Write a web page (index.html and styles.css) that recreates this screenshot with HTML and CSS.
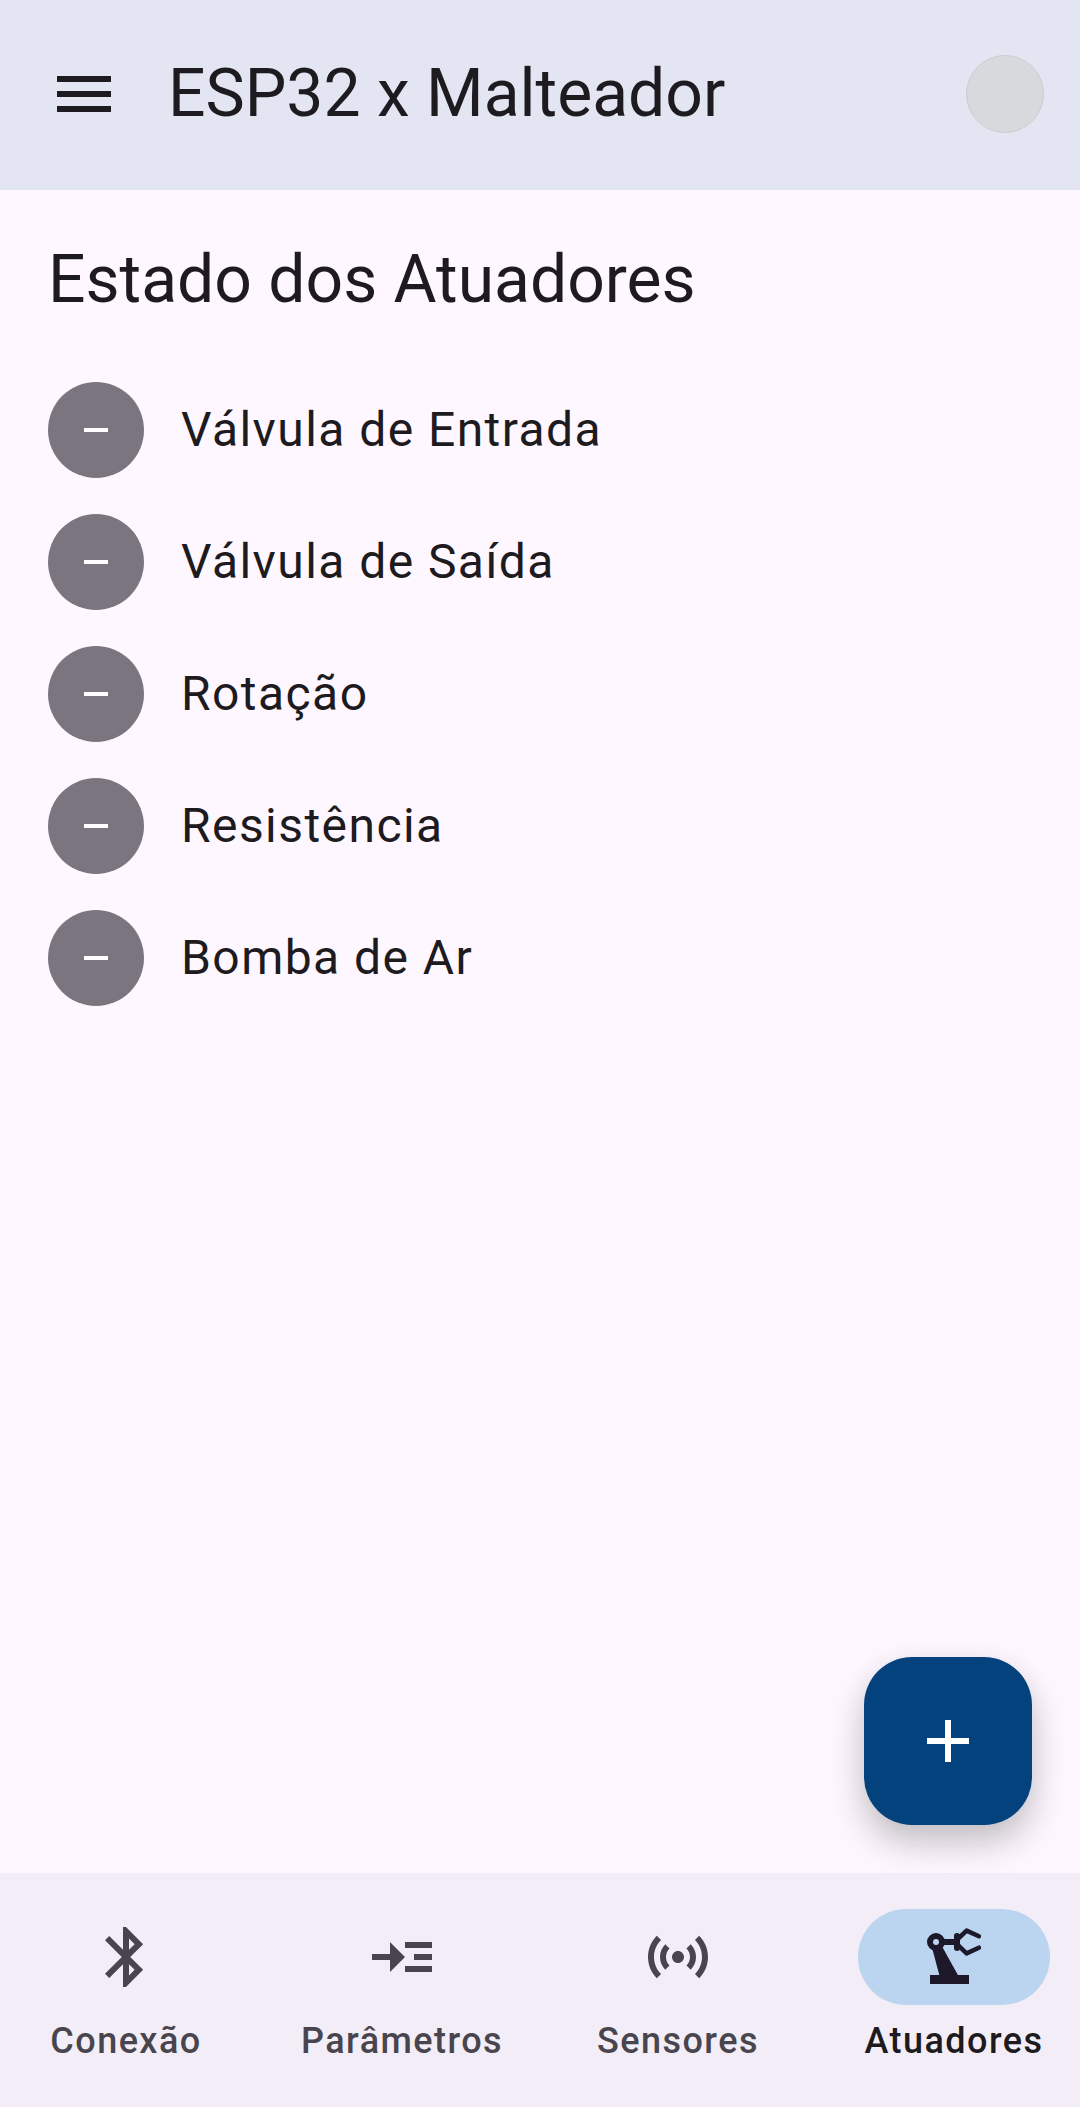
FILE: index.html
```html
<!DOCTYPE html>
<html lang="pt-BR">
<head>
<meta charset="utf-8">
<meta name="viewport" content="width=device-width, initial-scale=1">
<title>ESP32 x Malteador</title>
<link rel="stylesheet" href="styles.css">
</head>
<body>
<header class="app-bar">
  <button class="menu-button" type="button" aria-label="Menu">
    <svg class="icon" viewBox="0 0 24 24"><path d="M3 6h18v2H3V6m0 5h18v2H3v-2m0 5h18v2H3v-2Z"/></svg>
  </button>
  <h1 class="title">ESP32 x Malteador</h1>
  <span class="status" role="img" aria-label="Desconectado"></span>
</header>

<main class="content">
  <h2 class="title">Estado dos Atuadores</h2>
  <ul class="actuators">
    <li class="actuator"><span class="badge"><svg class="dash" viewBox="0 0 24 4"><path d="M0 0h24v4H0z"/></svg></span>Válvula de Entrada</li>
    <li class="actuator"><span class="badge"><svg class="dash" viewBox="0 0 24 4"><path d="M0 0h24v4H0z"/></svg></span>Válvula de Saída</li>
    <li class="actuator"><span class="badge"><svg class="dash" viewBox="0 0 24 4"><path d="M0 0h24v4H0z"/></svg></span>Rotação</li>
    <li class="actuator"><span class="badge"><svg class="dash" viewBox="0 0 24 4"><path d="M0 0h24v4H0z"/></svg></span>Resistência</li>
    <li class="actuator"><span class="badge"><svg class="dash" viewBox="0 0 24 4"><path d="M0 0h24v4H0z"/></svg></span>Bomba de Ar</li>
  </ul>
  <button class="fab" type="button" aria-label="Adicionar">
    <svg class="icon" viewBox="0 0 24 24"><path d="M19 13h-6v6h-2v-6H5v-2h6V5h2v6h6v2Z"/></svg>
  </button>
</main>

<nav class="tabs">
  <a class="tab" href="#conexao">
    <span class="pill"><svg class="icon" viewBox="0 0 24 24"><path fill-rule="evenodd" d="M17.71 7.71 12 2h-1v7.59L6.41 5 5 6.41 10.59 12 5 17.59 6.41 19 11 14.41V22h1l5.71-5.71-4.3-4.29 4.3-4.29ZM13 5.83l1.88 1.88L13 9.59V5.83Zm1.88 10.46L13 18.17v-3.76l1.88 1.88Z"/></svg></span>
    Conexão
  </a>
  <a class="tab" href="#parametros">
    <span class="pill"><svg class="icon" viewBox="0 0 24 24"><path d="M2 11h6V7l5 5-5 5v-4H2v-2Zm11-4h9v2h-9V7Zm3 4h6v2h-6v-2Zm-3 4h9v2h-9v-2Z"/></svg></span>
    Parâmetros
  </a>
  <a class="tab" href="#sensores">
    <span class="pill"><svg class="icon" viewBox="0 0 24 24"><path d="M7.76 16.24C6.67 15.16 6 13.66 6 12s.67-3.16 1.76-4.24l1.42 1.42C8.45 9.9 8 10.9 8 12c0 1.1.45 2.1 1.17 2.83l-1.41 1.41Zm8.48 0C17.33 15.16 18 13.66 18 12s-.67-3.16-1.76-4.24l-1.42 1.42C15.55 9.9 16 10.9 16 12c0 1.1-.45 2.1-1.17 2.83l1.41 1.41ZM12 10c-1.1 0-2 .9-2 2s.9 2 2 2 2-.9 2-2-.9-2-2-2Zm8 2c0 2.21-.9 4.21-2.35 5.65l1.42 1.42C20.88 17.26 22 14.76 22 12s-1.12-5.26-2.93-7.07l-1.42 1.42C19.1 7.79 20 9.79 20 12ZM6.35 6.35 4.93 4.93C3.12 6.74 2 9.24 2 12s1.12 5.26 2.93 7.07l1.42-1.42C4.9 16.21 4 14.21 4 12s.9-4.21 2.35-5.65Z"/></svg></span>
    Sensores
  </a>
  <a class="tab tab-active" href="#atuadores" aria-current="page">
    <span class="pill"><svg class="icon" viewBox="0 0 24 24"><path d="M4 18h3.1L4.7 9h3.6l5 9H17v3H4v-3Z"/><path fill-rule="evenodd" d="M6 4a3 3 0 1 0 0 6 3 3 0 0 0 0-6Zm0 2a1 1 0 1 1 0 2 1 1 0 0 1 0-2Z"/><path d="M8.5 6H12V5a1 1 0 0 1 2 0v4a1 1 0 0 1-2 0V8H8.5V6Z"/><path class="claw" d="m13.4 5.9 2.8-2.7 4.1 1.9M13.4 8.1l2.8 2.7 4.1-1.9"/></svg></span>
    Atuadores
  </a>
</nav>
</body>
</html>
```

FILE: styles.css
```css
* {
  box-sizing: border-box;
}

body {
  display: flex;
  flex-direction: column;
  min-height: 100vh;
  margin: 0;
  background: #fef7ff;
  color: #1d1b20;
  font-family: Roboto, "Noto Sans", sans-serif;
}

button {
  padding: 0;
  border: 0;
  background: none;
  color: inherit;
  cursor: pointer;
}

.icon {
  display: block;
  width: 72px;
  height: 72px;
  fill: currentColor;
}

.title {
  margin: 0;
  font-size: 66px;
  font-weight: 400;
  line-height: 84px;
}

.app-bar {
  display: flex;
  align-items: center;
  gap: 48px;
  padding: 52px 36px 54px 48px;
  background: #e3e5f2;
}

.app-bar .title {
  flex: 1;
}

.status {
  width: 78px;
  height: 78px;
  border: 1px solid #cccccc;
  border-radius: 50%;
  background: #d8d9dd;
}

.content {
  position: relative;
  flex: 1;
  padding: 48px;
}

.actuators {
  display: flex;
  flex-direction: column;
  gap: 36px;
  margin: 60px 0 0;
  padding: 0;
  list-style: none;
}

.actuator {
  display: flex;
  align-items: center;
  gap: 37px;
  font-size: 48px;
  line-height: 72px;
  letter-spacing: 0.03em;
}

.badge {
  display: flex;
  align-items: center;
  justify-content: center;
  width: 96px;
  height: 96px;
  border-radius: 50%;
  background: #7b757f;
}

.dash {
  width: 24px;
  height: 4px;
  fill: #ffffff;
}

.fab {
  position: absolute;
  right: 48px;
  bottom: 48px;
  display: flex;
  align-items: center;
  justify-content: center;
  width: 168px;
  height: 168px;
  border-radius: 48px;
  background: #04427e;
  color: #ffffff;
  box-shadow: 0 18px 36px rgba(0, 0, 0, 0.22), 0 4px 30px rgba(0, 0, 0, 0.04);
}

.tabs {
  display: grid;
  grid-template-columns: repeat(4, 1fr);
  gap: 24px;
  padding: 36px 0 42px;
  background: #f3edf7;
}

.tab {
  display: flex;
  flex-direction: column;
  align-items: center;
  gap: 12px;
  color: #49454f;
  font-size: 36px;
  font-weight: 500;
  line-height: 48px;
  letter-spacing: 0.04em;
  text-decoration: none;
}

.pill {
  display: flex;
  align-items: center;
  justify-content: center;
  width: 192px;
  height: 96px;
  border-radius: 48px;
}

.tab-active {
  color: #1d1b20;
}

.tab-active .pill {
  background: #bbd4ef;
  color: #1d192b;
}

.claw {
  fill: none;
  stroke: currentColor;
  stroke-width: 1.5;
  stroke-linecap: round;
  stroke-linejoin: round;
}
```
